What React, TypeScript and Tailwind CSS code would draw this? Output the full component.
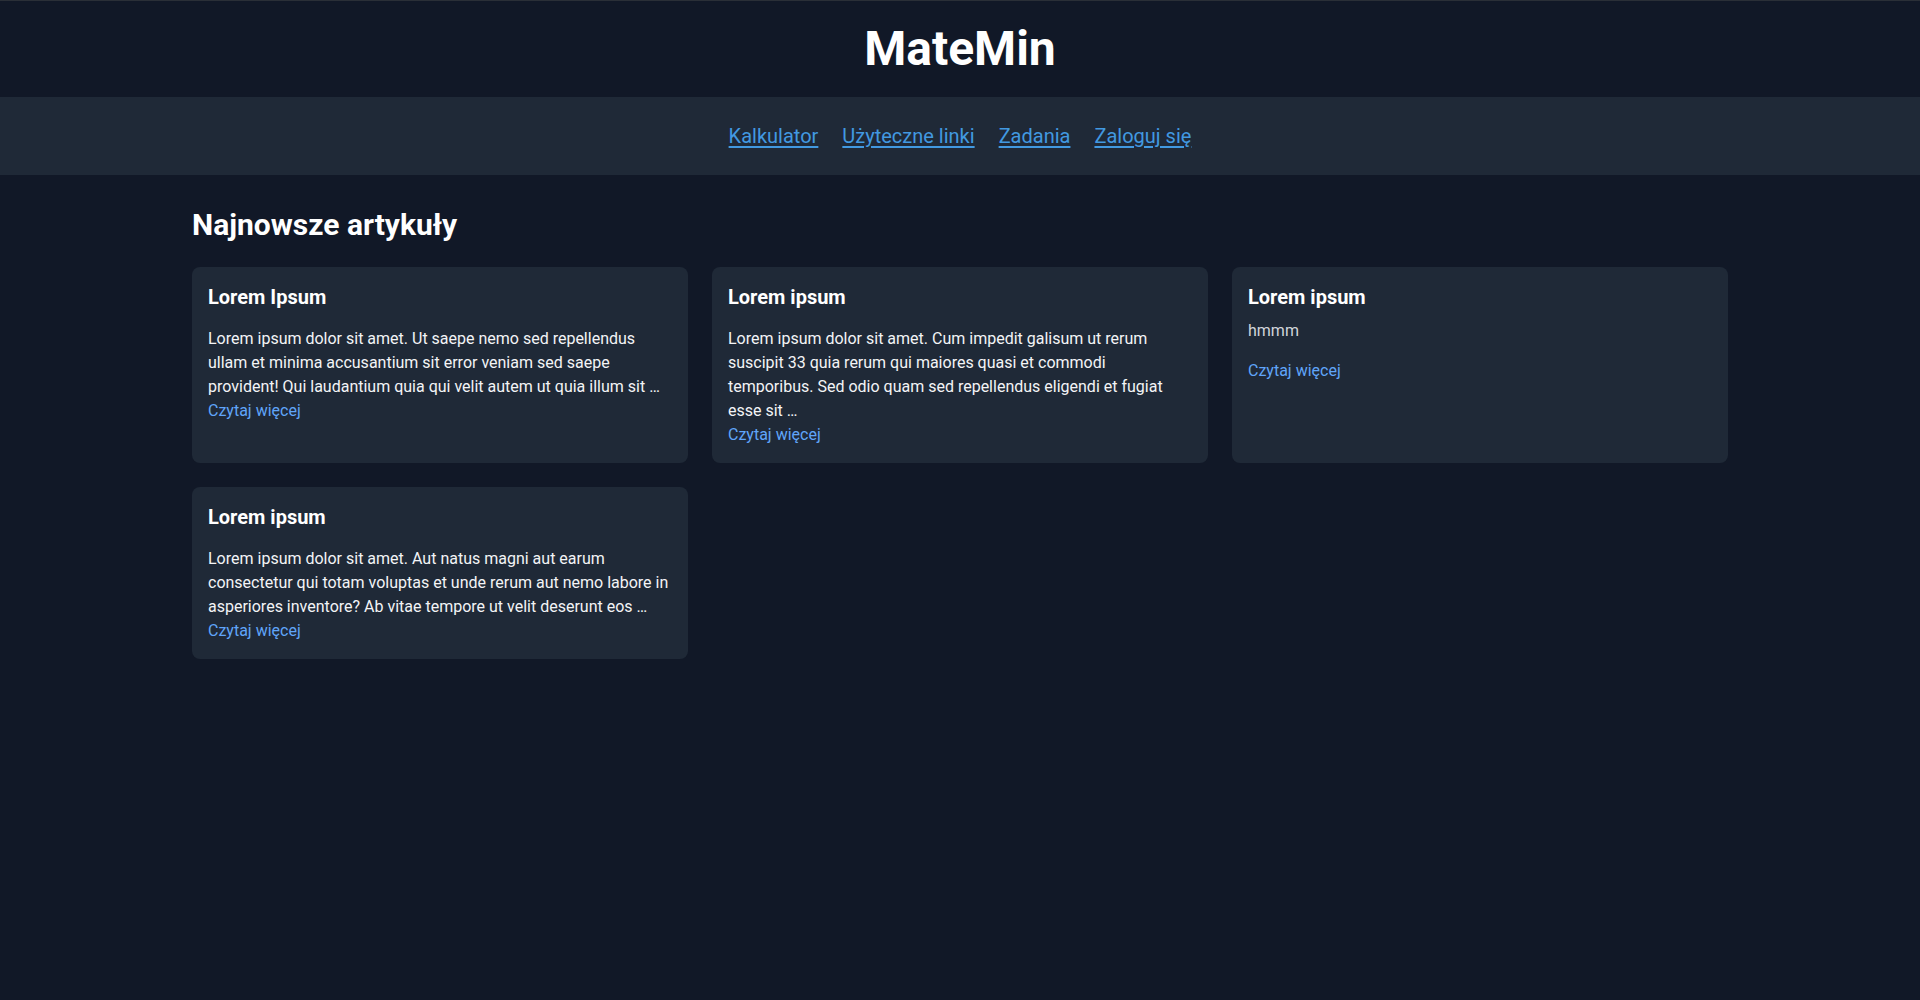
import React from "react";

type Article = {
  title: string;
  body: string;
  short?: boolean;
};

const articles: Article[] = [
  {
    title: "Lorem Ipsum",
    body: "Lorem ipsum dolor sit amet. Ut saepe nemo sed repellendus ullam et minima accusantium sit error veniam sed saepe provident! Qui laudantium quia qui velit autem ut quia illum sit …",
  },
  {
    title: "Lorem ipsum",
    body: "Lorem ipsum dolor sit amet. Cum impedit galisum ut rerum suscipit 33 quia rerum qui maiores quasi et commodi temporibus. Sed odio quam sed repellendus eligendi et fugiat esse sit …",
  },
  { title: "Lorem ipsum", body: "hmmm", short: true },
  {
    title: "Lorem ipsum",
    body: "Lorem ipsum dolor sit amet. Aut natus magni aut earum consectetur qui totam voluptas et unde rerum aut nemo labore in asperiores inventore? Ab vitae tempore ut velit deserunt eos …",
  },
];

const navLinks = ["Kalkulator", "Użyteczne linki", "Zadania", "Zaloguj się"];

function ArticleCard({ article }: { article: Article }) {
  return (
    <div className="rounded-lg bg-[#1f2937] p-4">
      <h3 className={`text-xl font-bold leading-7 text-white ${article.short ? "mb-2" : "mb-4"}`}>
        {article.title}
      </h3>
      {article.short ? (
        <p className="mb-4 text-base leading-6 text-[#d1d5db]">{article.body}</p>
      ) : (
        <p className="text-base leading-6 text-[#f3f4f6]">{article.body}</p>
      )}
      <a href="#" className="block text-base leading-6 text-[#60a5fa]">
        Czytaj więcej
      </a>
    </div>
  );
}

export default function App() {
  return (
    <div className="min-h-screen bg-[#111827] font-['Roboto',sans-serif] text-white">
      {/* Header */}
      <header className="flex h-[97px] items-center justify-center border-t border-[#2a2f37]">
        <h1 className="text-5xl font-bold leading-none text-white">MateMin</h1>
      </header>

      {/* Nav */}
      <nav className="flex h-[78px] items-center justify-center gap-6 bg-[#1f2937]">
        {navLinks.map((l) => (
          <a key={l} href="#" className="text-xl text-[#4299e1] underline underline-offset-[3px]">
            {l}
          </a>
        ))}
      </nav>

      {/* Articles */}
      <main className="mx-auto max-w-[1536px] pt-8">
        <h2 className="mb-6 text-3xl font-bold leading-9 text-white">Najnowsze artykuły</h2>
        <div className="grid grid-cols-3 gap-6">
          {articles.map((a, i) => (
            <ArticleCard key={i} article={a} />
          ))}
        </div>
      </main>
    </div>
  );
}
